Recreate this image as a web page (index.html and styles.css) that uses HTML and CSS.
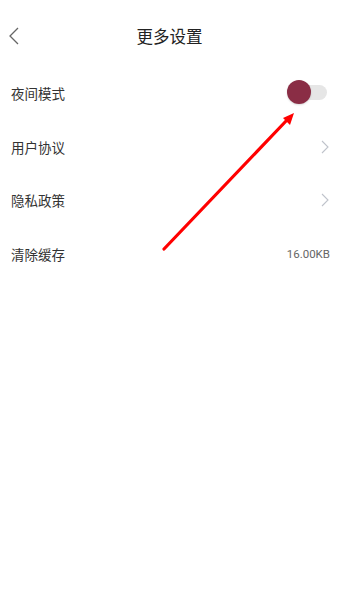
FILE: index.html
```html
<!DOCTYPE html>
<html lang="zh">
<head>
<meta charset="utf-8">
<link rel="stylesheet" href="styles.css">
</head>
<body>
<div class="page">
  <header class="nav">
    <svg class="back" width="12" height="18" viewBox="0 0 12 18"><path d="M10 1 L2 9 L10 17" fill="none" stroke="#666" stroke-width="1.3"/></svg>
    <h1 class="title">更多设置</h1>
  </header>
  <ul class="list">
    <li class="row"><span class="label">夜间模式</span>
      <span class="switch"><span class="knob"></span></span></li>
    <li class="row"><span class="label">用户协议</span>
      <svg class="chev" width="8" height="14" viewBox="0 0 8 14"><path d="M1 1 L7 7 L1 13" fill="none" stroke="#bfc3cb" stroke-width="1.1"/></svg></li>
    <li class="row"><span class="label">隐私政策</span>
      <svg class="chev" width="8" height="14" viewBox="0 0 8 14"><path d="M1 1 L7 7 L1 13" fill="none" stroke="#bfc3cb" stroke-width="1.1"/></svg></li>
    <li class="row"><span class="label">清除缓存</span><span class="value">16.00KB</span></li>
  </ul>
  <svg class="arrow" width="339" height="608" viewBox="0 0 339 608">
    <line x1="164" y1="249" x2="287" y2="120" stroke="#ff0000" stroke-width="3.2" stroke-linecap="round"/>
    <polygon points="294,113 283,118 290,125" fill="#ff0000"/>
  </svg>
</div>
</body>
</html>
```
FILE: styles.css
```css
* { box-sizing: border-box; }
html, body { margin: 0; padding: 0; background: #fff; }
body { font-family: "Noto Sans CJK SC", Roboto, sans-serif; }
.page { position: relative; width: 339px; height: 608px; overflow: hidden; }
.nav { position: relative; height: 66px; display: flex; align-items: center; justify-content: center; padding-top: 6px; }
.back { position: absolute; left: 8px; top: 27px; }
.title { margin: 0; font-size: 16.5px; font-weight: 400; color: #222; line-height: 1; }
.list { list-style: none; margin: 0; padding: 0 9px 0 11px; }
.row { height: 53.7px; display: flex; align-items: center; justify-content: space-between; }
.label { font-size: 13.5px; color: #333; }
.value { font-size: 11.5px; color: #666; font-family: Roboto, sans-serif; margin-right: 0; }
.chev { margin-right: 1px; }
.switch { position: relative; width: 31px; height: 15px; border-radius: 8px; background: #e6e6e6; margin-right: 3px; }
.knob { position: absolute; left: -9px; top: -5px; width: 24px; height: 24px; border-radius: 50%; background: #8a2d45; box-shadow: 0 1px 2px rgba(0,0,0,0.15); }
.arrow { position: absolute; left: 0; top: 0; pointer-events: none; }
```
